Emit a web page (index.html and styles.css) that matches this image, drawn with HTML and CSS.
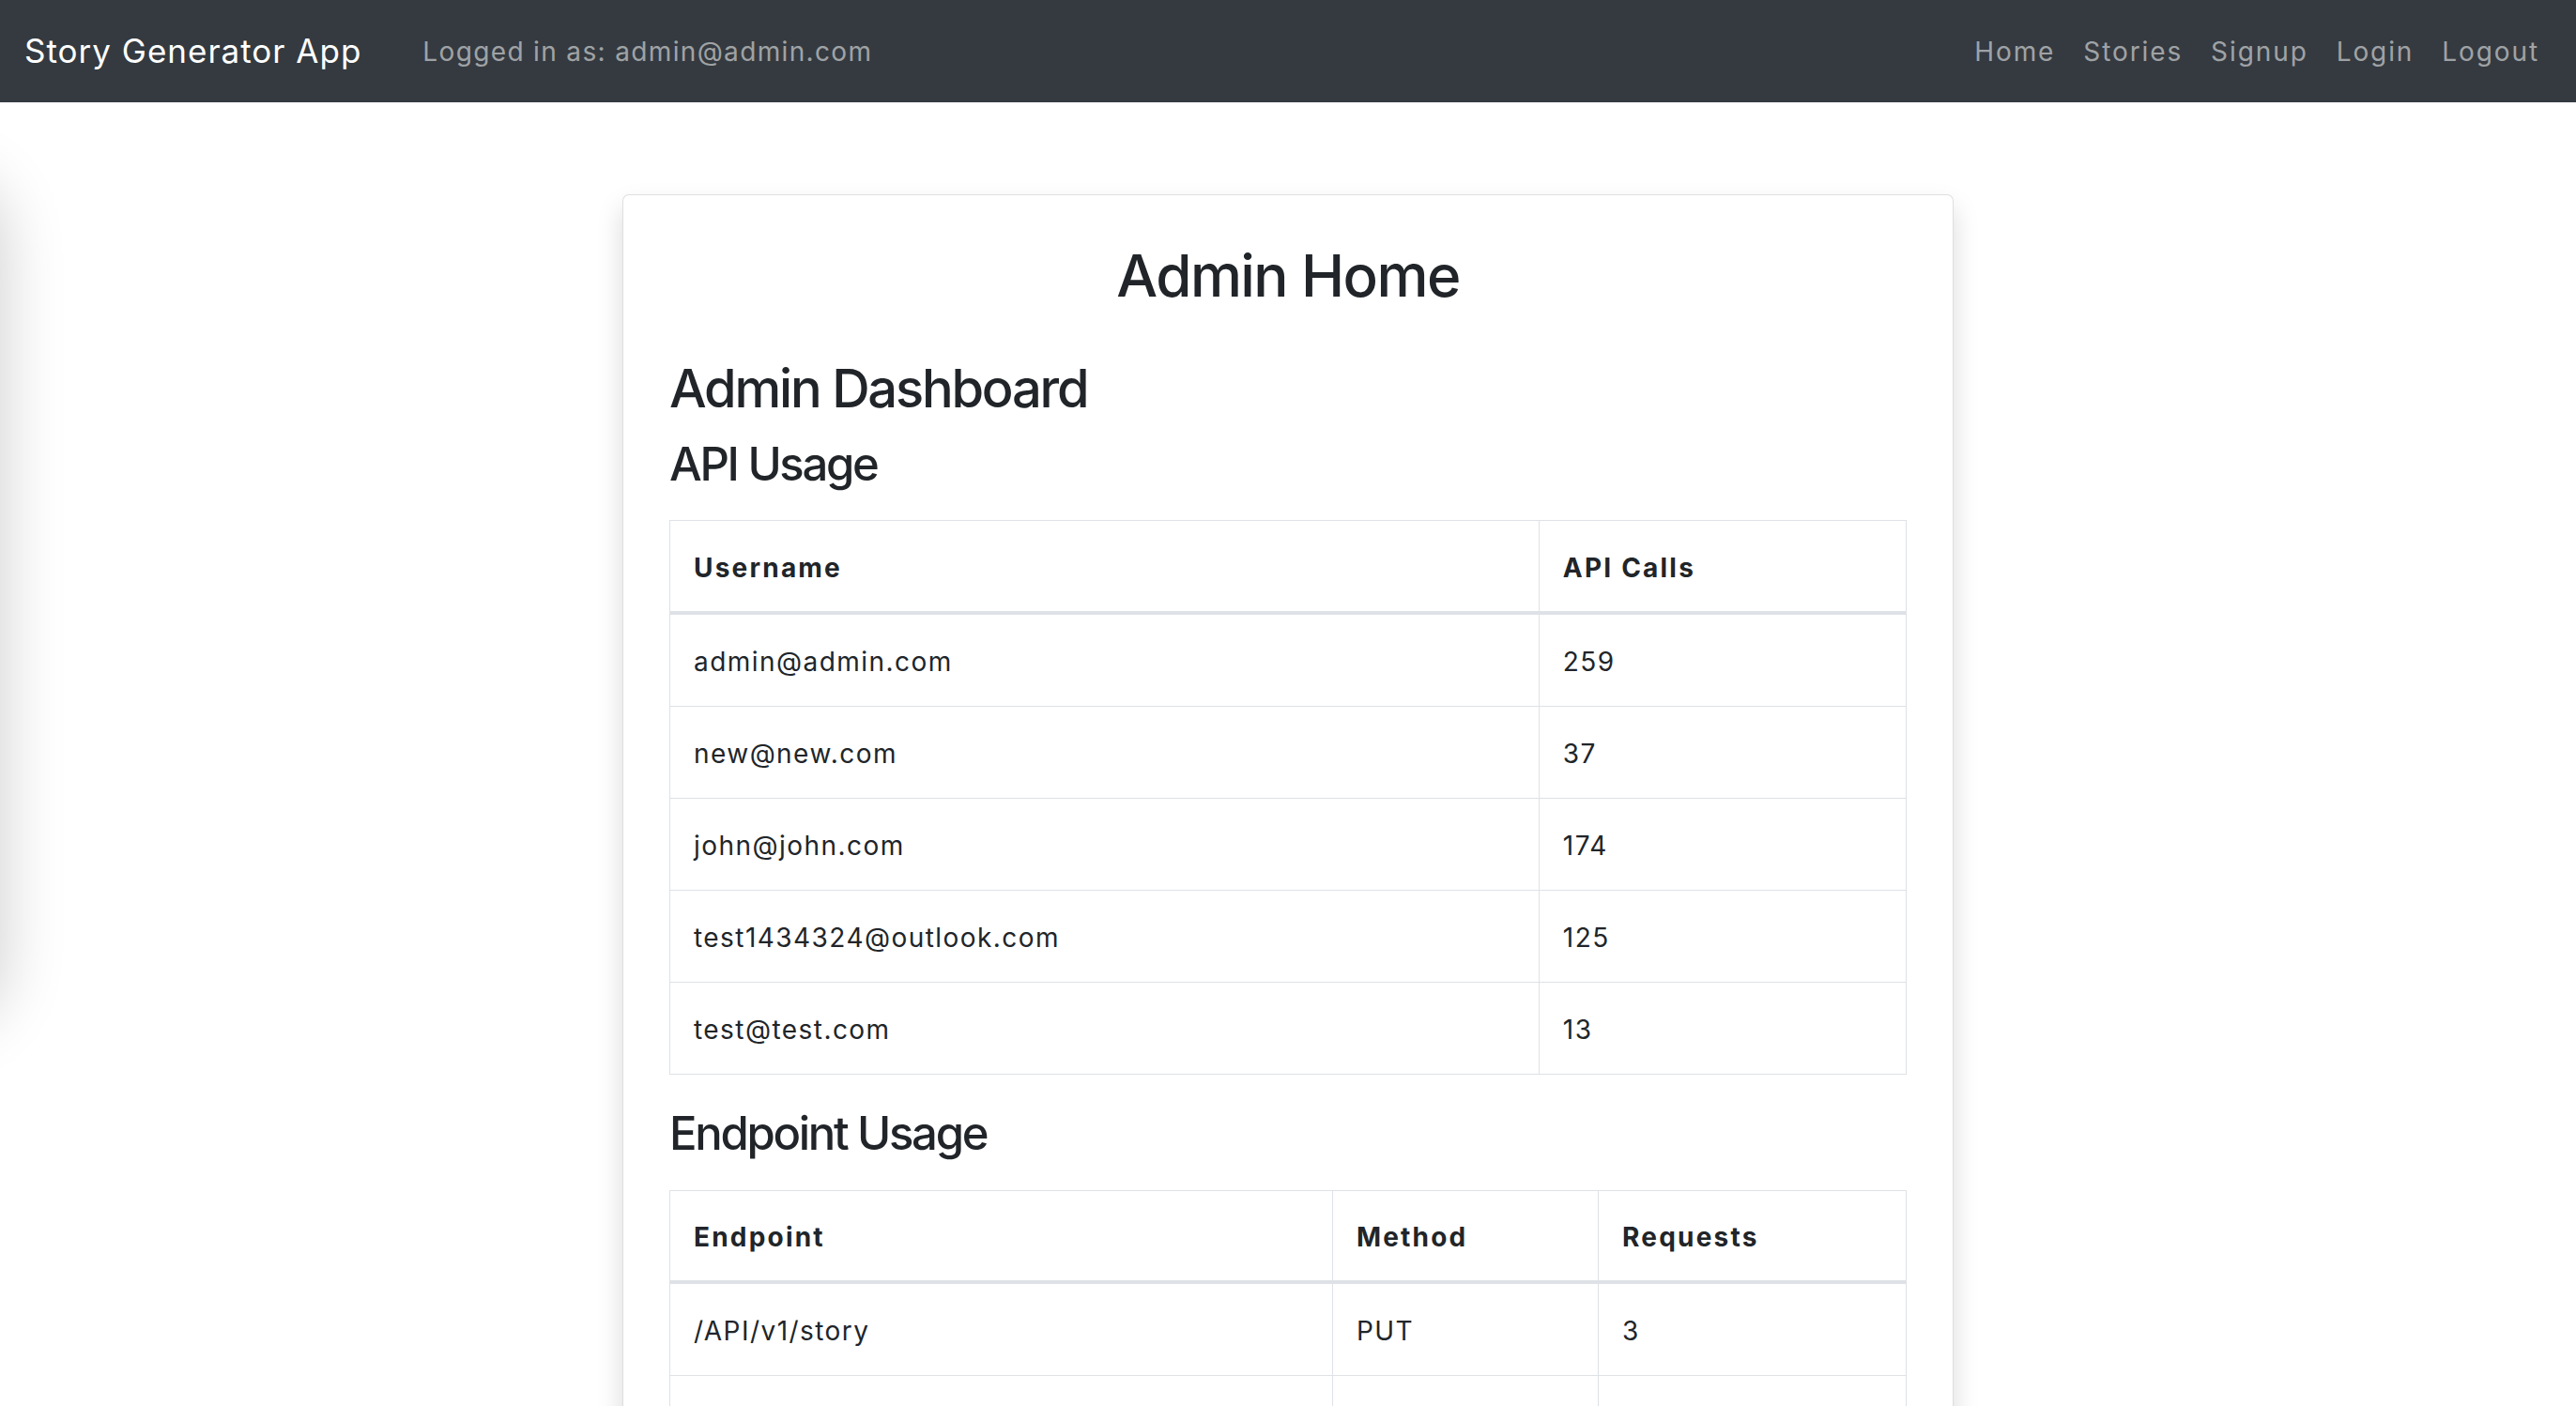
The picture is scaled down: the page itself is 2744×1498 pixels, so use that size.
FILE: index.html
```html
<!DOCTYPE html>
<html lang="en">
<head>
<meta charset="utf-8">
<title>Story Generator App - Admin Home</title>
<link rel="stylesheet" href="styles.css">
</head>
<body>
<nav class="navbar">
  <div class="nav-left">
    <a class="brand" href="#">Story Generator App</a>
    <span class="nav-user">Logged in as: admin@admin.com</span>
  </div>
  <ul class="nav-links">
    <li><a href="#">Home</a></li>
    <li><a href="#">Stories</a></li>
    <li><a href="#">Signup</a></li>
    <li><a href="#">Login</a></li>
    <li><a href="#">Logout</a></li>
  </ul>
</nav>
<div class="edge-shadow"></div>
<main class="page">
  <section class="card">
    <h1 class="page-title">Admin Home</h1>
    <h2 class="section-title">Admin Dashboard</h2>
    <h3 class="sub-title">API Usage</h3>
    <table class="data-table">
      <thead>
        <tr><th class="col-user">Username</th><th>API Calls</th></tr>
      </thead>
      <tbody>
        <tr><td>admin@admin.com</td><td>259</td></tr>
        <tr><td>new@new.com</td><td>37</td></tr>
        <tr><td>john@john.com</td><td>174</td></tr>
        <tr><td>test1434324@outlook.com</td><td>125</td></tr>
        <tr><td>test@test.com</td><td>13</td></tr>
      </tbody>
    </table>
    <h3 class="sub-title">Endpoint Usage</h3>
    <table class="data-table">
      <thead>
        <tr><th class="col-endpoint">Endpoint</th><th class="col-method">Method</th><th>Requests</th></tr>
      </thead>
      <tbody>
        <tr><td>/API/v1/story</td><td>PUT</td><td>3</td></tr>
        <tr><td>/API/v1/story</td><td>POST</td><td>12</td></tr>
        <tr><td>/API/v1/stories</td><td>GET</td><td>27</td></tr>
      </tbody>
    </table>
  </section>
</main>
</body>
</html>
```
FILE: styles.css
```css
html, body {
  margin: 0;
  padding: 0;
  background: #fff;
}

body {
  font-family: Inter, "Noto Sans", "Liberation Sans", sans-serif;
  color: #212529;
  font-size: 28px;
  line-height: 1.5;
  letter-spacing: 1.45px;
}

a {
  text-decoration: none;
}

.navbar {
  display: flex;
  align-items: center;
  justify-content: space-between;
  height: 109px;
  padding: 0 26px;
  box-sizing: border-box;
  background: #343a40;
}

.nav-left {
  display: flex;
  align-items: center;
}

.brand {
  font-size: 35px;
  letter-spacing: 1px;
  color: #fff;
  margin-right: 65px;
}

.nav-user {
  font-size: 28px;
  letter-spacing: 1.35px;
  color: rgba(255, 255, 255, 0.55);
}

.nav-links {
  display: flex;
  list-style: none;
  margin: 0;
  padding: 0;
}

.nav-links a {
  display: block;
  padding: 0 15px;
  font-size: 28px;
  letter-spacing: 1.9px;
  color: rgba(255, 255, 255, 0.55);
}

.nav-links li:last-child a {
  padding-right: 13px;
}

.edge-shadow {
  position: fixed;
  left: -300px;
  top: 190px;
  width: 300px;
  height: 900px;
  border-radius: 60px;
  box-shadow: 0 0 70px rgba(0, 0, 0, 0.2);
}

.page {
  padding-top: 98px;
}

.card {
  width: 1418px;
  box-sizing: border-box;
  margin: 0 auto;
  padding: 49px;
  background: #fff;
  border: 1px solid rgba(0, 0, 0, 0.125);
  border-radius: 7px;
  box-shadow: 0 14px 28px rgba(0, 0, 0, 0.15);
}

.page-title {
  margin: 0 0 50px;
  font-size: 62px;
  font-weight: 500;
  line-height: 1.2;
  letter-spacing: -1.6px;
  text-align: center;
}

.section-title {
  margin: 0 0 17.5px;
  font-size: 56px;
  font-weight: 500;
  line-height: 1.2;
  letter-spacing: -2.2px;
}

.sub-title {
  margin: 0 0 29.5px;
  font-size: 49px;
  font-weight: 500;
  line-height: 1.2;
  letter-spacing: -2.3px;
}

.data-table {
  width: 100%;
  border-collapse: collapse;
  margin-bottom: 34.5px;
}

.data-table th,
.data-table td {
  border: 1px solid #dee2e6;
  padding: 29px 25px 26px;
  text-align: left;
  vertical-align: middle;
}

.data-table th {
  font-weight: 700;
  letter-spacing: 2.2px;
}

.data-table thead th {
  padding-top: 28.5px;
  padding-bottom: 25px;
  border-bottom: 4px solid #dee2e6;
}

.col-user {
  width: 70.3%;
}

.col-endpoint {
  width: 53.6%;
}

.col-method {
  width: 21.5%;
}
```
